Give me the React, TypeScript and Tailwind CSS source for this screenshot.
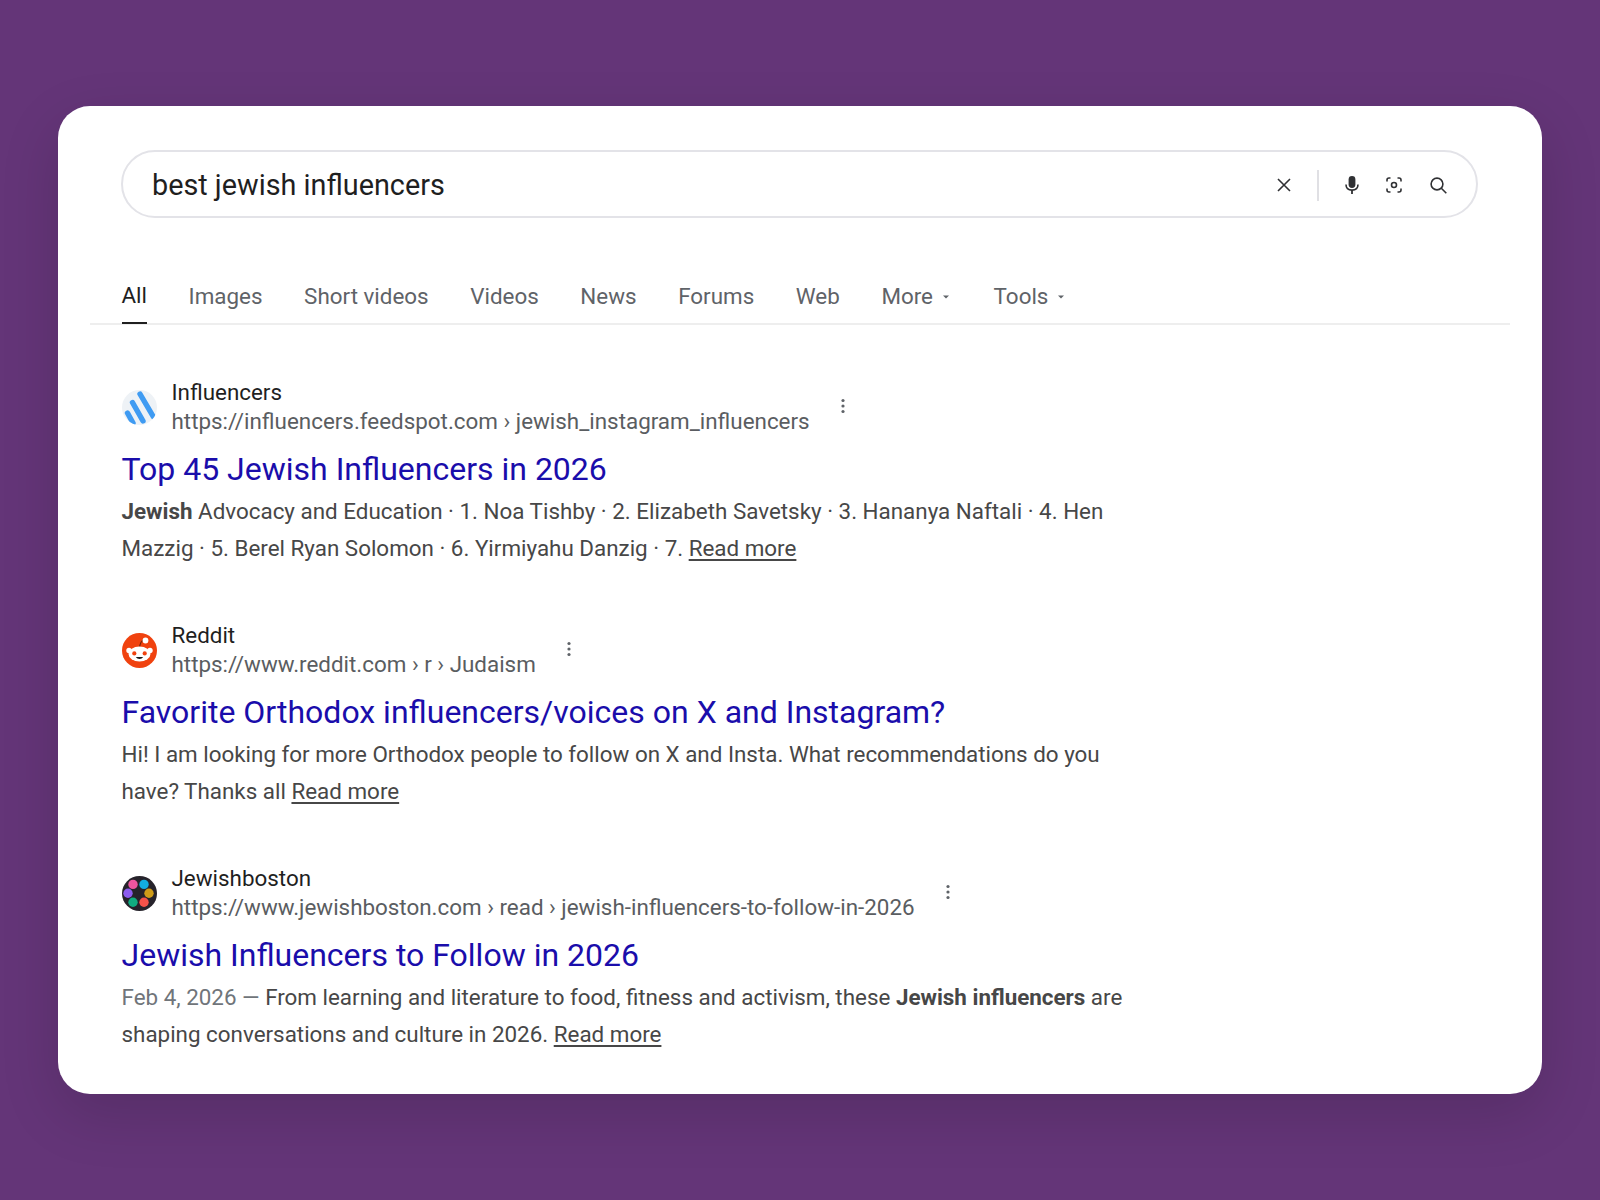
const tabs = ['Images', 'Short videos', 'Videos', 'News', 'Forums', 'Web'];

const Caret = ({ className }: { className: string }) => (
  <svg width="8" height="4" viewBox="0 0 8 4" className={className}>
    <path d="M1 0.5h6L4 3.5z" fill="#5f6368" />
  </svg>
);

const Dots = ({ className }: { className: string }) => (
  <svg width="4" height="16" viewBox="0 0 4 16" className={className}>
    <circle cx="2" cy="2.5" r="1.6" fill="#5f6368" />
    <circle cx="2" cy="8" r="1.6" fill="#5f6368" />
    <circle cx="2" cy="13.5" r="1.6" fill="#5f6368" />
  </svg>
);

const FeedspotLogo = () => (
  <svg width="35" height="35" viewBox="0 0 35 35">
    <defs>
      <clipPath id="fs-clip">
        <circle cx="17.5" cy="17.5" r="17.5" />
      </clipPath>
    </defs>
    <circle cx="17.5" cy="17.5" r="17.5" fill="#eef2f6" />
    <g clipPath="url(#fs-clip)" stroke="#3f9bf2" strokeWidth="5.4" strokeLinecap="round">
      <path d="M18 4L31.5 27" />
      <path d="M10.5 12.5L21 31" />
      <path d="M5.5 23L11 33" />
    </g>
  </svg>
);

const RedditLogo = () => (
  <svg width="35" height="35" viewBox="0 0 35 35">
    <circle cx="17.5" cy="17.5" r="17.5" fill="#f0420f" />
    <path d="M17.5 15C18 10 19 7.5 22 7" fill="none" stroke="#6e2208" strokeWidth="1.1" />
    <circle cx="23.5" cy="7.5" r="2.9" fill="#fff" />
    <circle cx="7" cy="17.5" r="2.7" fill="#fff" />
    <circle cx="28" cy="17.5" r="2.7" fill="#fff" />
    <ellipse cx="17.5" cy="21" rx="11" ry="7.4" fill="#fff" />
    <circle cx="12.3" cy="20.4" r="2.1" fill="#f0420f" />
    <circle cx="22.7" cy="20.4" r="2.1" fill="#f0420f" />
    <path d="M13.8 24C15.5 26.6 19.5 26.6 21.2 24z" fill="#1a1a1b" />
  </svg>
);

const BostonLogo = () => (
  <svg width="35" height="35" viewBox="0 0 35 35">
    <circle cx="17.5" cy="17.5" r="17.5" fill="#26232b" />
    <circle cx="11" cy="8.4" r="4.7" fill="#f0559f" />
    <circle cx="22" cy="8.4" r="4.7" fill="#12aee0" />
    <circle cx="27" cy="17.3" r="4.7" fill="#cf9c18" />
    <circle cx="22" cy="26.2" r="4.7" fill="#f5524a" />
    <circle cx="11" cy="26.2" r="4.7" fill="#10ad80" />
    <circle cx="6" cy="17.3" r="4.7" fill="#8d5cf0" />
  </svg>
);

const Snippet = ({ children }: { children: React.ReactNode }) => (
  <p className="mt-[2px] w-[1010px] text-[22.4px] leading-[37px] text-[#474747]">{children}</p>
);

const ReadMore = () => <span className="underline underline-offset-[3px]">Read more</span>;

const Result = ({
  logo,
  name,
  url,
  title,
  children,
}: {
  logo: React.ReactNode;
  name: string;
  url: string;
  title: string;
  children: React.ReactNode;
}) => (
  <div className="mb-[54px]">
    <div className="flex items-center">
      {logo}
      <div className="ml-[15px]">
        <div className="text-[22.4px] leading-[29px] text-[#1f1f1f]">{name}</div>
        <div className="text-[22.4px] leading-[29px] text-[#5a5d61]">{url}</div>
      </div>
      <Dots className="ml-[31px] -mt-[2px]" />
    </div>
    <h3 className="mt-[11px] text-[32px] leading-[44px] text-[#1a0dab]">{title}</h3>
    <Snippet>{children}</Snippet>
  </div>
);

export default function App() {
  return (
    <div className="h-[1200px] bg-[#643578] px-[58px] pt-[106px] font-['Roboto',sans-serif]">
      <div className="h-[988px] overflow-hidden rounded-[32px] bg-white px-[32px] pt-[44px] shadow-[0_20px_60px_rgba(0,0,0,0.14)]">
        <div className="ml-[31px] mr-[32px] flex h-[68px] items-center rounded-full border-2 border-[#e3e3e8] pl-[29px] pr-[29px] pt-[2px]">
          <span className="mt-[2px] flex-1 text-[28.8px] text-[#1f1f1f]">best jewish influencers</span>
          <svg width="16" height="16" viewBox="0 0 16 16" fill="none" stroke="#303134" strokeWidth="1.6">
            <path d="M2 2l12 12M14 2L2 14" />
          </svg>
          <div className="ml-[25px] mr-[26px] h-[31px] w-[2px] bg-[#e0e0e4]" />
          <svg width="14" height="18" viewBox="0 0 14 18" fill="#303134">
            <rect x="3.6" y="0" width="6.8" height="12" rx="3.4" />
            <path d="M1 8.5c0 3.6 2.6 5.6 6 5.6s6-2 6-5.6" fill="none" stroke="#303134" strokeWidth="1.6" />
            <rect x="6.1" y="14" width="1.8" height="4" />
          </svg>
          <svg width="16" height="16" viewBox="0 0 16 16" fill="none" stroke="#303134" strokeWidth="1.6" className="ml-[27px]">
            <path d="M1 4.5V3a2 2 0 0 1 2-2h1.5M11.5 1H13a2 2 0 0 1 2 2v1.5M15 11.5V13a2 2 0 0 1-2 2h-1.5M4.5 15H3a2 2 0 0 1-2-2v-1.5" />
            <circle cx="8" cy="8" r="2.5" />
          </svg>
          <svg width="17" height="17" viewBox="0 0 17 17" fill="none" stroke="#303134" strokeWidth="1.6" className="ml-[28px]">
            <circle cx="7" cy="7" r="5.9" />
            <path d="M11.3 11.3L16.3 16.3" />
          </svg>
        </div>

        <div className="mt-[58px] flex h-[49px] items-start gap-[41.6px] border-b-2 border-[#eeeeee] pl-[31.5px] text-[22.4px] leading-[34px] text-[#5f6368]">
          <div className="h-[48px] border-b-2 border-[#1f1f1f] pt-[2px] text-[#1f1f1f]">All</div>
          {tabs.map((tab) => (
            <div key={tab} className="pt-[3px]">
              {tab}
            </div>
          ))}
          <div className="flex items-center pt-[3px]">
            More
            <Caret className="ml-[9px] mr-[2px] mt-[1px]" />
          </div>
          <div className="flex items-center pt-[3px]">
            Tools
            <Caret className="ml-[9px] mt-[1px]" />
          </div>
        </div>

        <div className="mt-[53px] pl-[31.5px] pr-[32px]">
          <Result
            logo={<FeedspotLogo />}
            name="Influencers"
            url="https://influencers.feedspot.com › jewish_instagram_influencers"
            title="Top 45 Jewish Influencers in 2026"
          >
            <b>Jewish</b> Advocacy and Education · 1. Noa Tishby · 2. Elizabeth Savetsky · 3. Hananya Naftali · 4. Hen
            Mazzig · 5. Berel Ryan Solomon · 6. Yirmiyahu Danzig · 7. <ReadMore />
          </Result>
          <Result
            logo={<RedditLogo />}
            name="Reddit"
            url="https://www.reddit.com › r › Judaism"
            title="Favorite Orthodox influencers/voices on X and Instagram?"
          >
            Hi! I am looking for more Orthodox people to follow on X and Insta. What recommendations do you have? Thanks
            all <ReadMore />
          </Result>
          <Result
            logo={<BostonLogo />}
            name="Jewishboston"
            url="https://www.jewishboston.com › read › jewish-influencers-to-follow-in-2026"
            title="Jewish Influencers to Follow in 2026"
          >
            <span className="text-[#70757a]">Feb 4, 2026 — </span>From learning and literature to food, fitness and
            activism, these <b>Jewish influencers</b> are shaping conversations and culture in 2026. <ReadMore />
          </Result>
        </div>
      </div>
    </div>
  );
}
